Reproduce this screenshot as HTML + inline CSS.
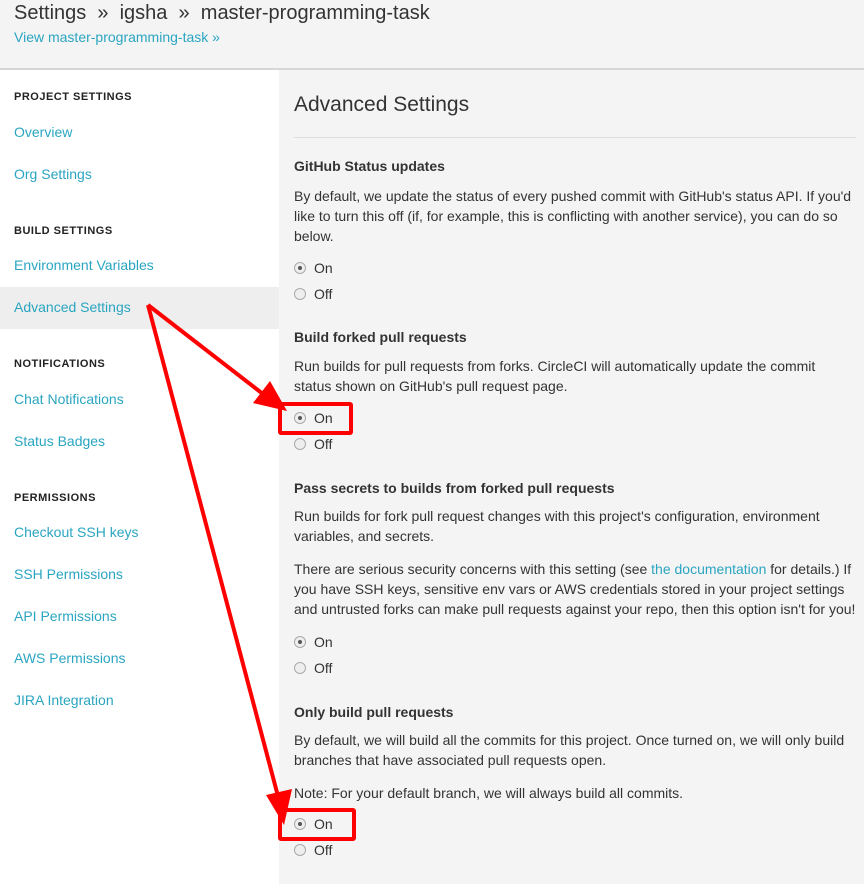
<!DOCTYPE html>
<html><head><style>
body{margin:0;width:864px;height:884px;overflow:hidden;background:#f4f4f4;font-family:"Liberation Sans",sans-serif;color:#333;position:relative}
.hdr{position:absolute;left:0;top:0;width:864px;height:68px;border-bottom:2px solid #d6d6d6;background:#f4f4f4}
.hdr h1{margin:0;position:absolute;left:14px;top:2px;font-weight:normal;font-size:20px;color:#333}
.hdr a{position:absolute;left:14px;top:29px;font-size:14px;color:#2aa5c1}
.side{position:absolute;left:0;top:70px;width:279px;height:814px;background:#fff}
.sh{position:absolute;left:14px;font-size:11px;font-weight:bold;letter-spacing:.5px;color:#222}
.sl{position:absolute;left:14px;font-size:14px;color:#2aa5c1}
.act{position:absolute;left:0;top:287px;width:279px;height:42px;background:#eeeeee}
.t{position:absolute;left:294px;font-size:14px;line-height:20px;color:#333;width:562px}
.b{font-weight:bold}
.r{position:absolute;left:294px;font-size:14px}
.r i{display:inline-block;width:10px;height:10px;border:1px solid #aaa;border-radius:50%;background:#eee;vertical-align:-1px;margin-right:8px;position:relative}
.r i.on::after{content:"";position:absolute;left:3px;top:3px;width:4px;height:4px;border-radius:50%;background:#555}
.box{position:absolute;border:4px solid #f00;border-radius:3px}
</style></head><body>
<div class="hdr"><h1>Settings &nbsp;» &nbsp;igsha &nbsp;» &nbsp;master-programming-task</h1><a>View master-programming-task »</a></div>
<div class="side"></div>
<div class="act"></div>
<div class="sh" style="top:91px">PROJECT SETTINGS</div>
<div class="sl" style="top:124px">Overview</div>
<div class="sl" style="top:166px">Org Settings</div>
<div class="sh" style="top:225px">BUILD SETTINGS</div>
<div class="sl" style="top:257px">Environment Variables</div>
<div class="sl" style="top:299px">Advanced Settings</div>
<div class="sh" style="top:358px">NOTIFICATIONS</div>
<div class="sl" style="top:391px">Chat Notifications</div>
<div class="sl" style="top:433px">Status Badges</div>
<div class="sh" style="top:492px">PERMISSIONS</div>
<div class="sl" style="top:524px">Checkout SSH keys</div>
<div class="sl" style="top:566px">SSH Permissions</div>
<div class="sl" style="top:608px">API Permissions</div>
<div class="sl" style="top:650px">AWS Permissions</div>
<div class="sl" style="top:692px">JIRA Integration</div>

<div class="t" style="top:93px;font-size:21px;line-height:24px">Advanced Settings</div>
<div style="position:absolute;left:294px;top:137px;width:562px;height:1px;background:#ddd"></div>
<div class="t b" style="top:156px">GitHub Status updates</div>
<div class="t" style="top:186px">By default, we update the status of every pushed commit with GitHub's status API. If you'd like to turn this off (if, for example, this is conflicting with another service), you can do so below.</div>
<div class="r" style="top:260px"><i class="on"></i>On</div>
<div class="r" style="top:286px"><i></i>Off</div>
<div class="t b" style="top:327px">Build forked pull requests</div>
<div class="t" style="top:356px">Run builds for pull requests from forks. CircleCI will automatically update the commit<br>status shown on GitHub's pull request page.</div>
<div class="r" style="top:410px"><i class="on"></i>On</div>
<div class="r" style="top:436px"><i></i>Off</div>
<div class="t b" style="top:478px">Pass secrets to builds from forked pull requests</div>
<div class="t" style="top:506px">Run builds for fork pull request changes with this project's configuration, environment variables, and secrets.</div>
<div class="t" style="top:559px">There are serious security concerns with this setting (see <span style="color:#2aa5c1">the documentation</span> for details.) If you have SSH keys, sensitive env vars or AWS credentials stored in your project settings and untrusted forks can make pull requests against your repo, then this option isn't for you!</div>
<div class="r" style="top:634px"><i class="on"></i>On</div>
<div class="r" style="top:660px"><i></i>Off</div>
<div class="t b" style="top:702px">Only build pull requests</div>
<div class="t" style="top:730px">By default, we will build all the commits for this project. Once turned on, we will only build branches that have associated pull requests open.</div>
<div class="t" style="top:783px">Note: For your default branch, we will always build all commits.</div>
<div class="r" style="top:816px"><i class="on"></i>On</div>
<div class="r" style="top:842px"><i></i>Off</div>

<div class="box" style="left:278px;top:402px;width:67px;height:25px"></div>
<div class="box" style="left:278px;top:808px;width:70px;height:25px"></div>
<svg style="position:absolute;left:0;top:0" width="864" height="884">
<line x1="148" y1="305" x2="272" y2="401" stroke="#f00" stroke-width="4"/>
<path d="M287,411 L253,403 L270,381 z" fill="#f00"/>
<line x1="148" y1="305" x2="279" y2="800" stroke="#f00" stroke-width="4"/>
<path d="M284,825 L266,795 L292,789 z" fill="#f00"/>
</svg>
</body></html>
